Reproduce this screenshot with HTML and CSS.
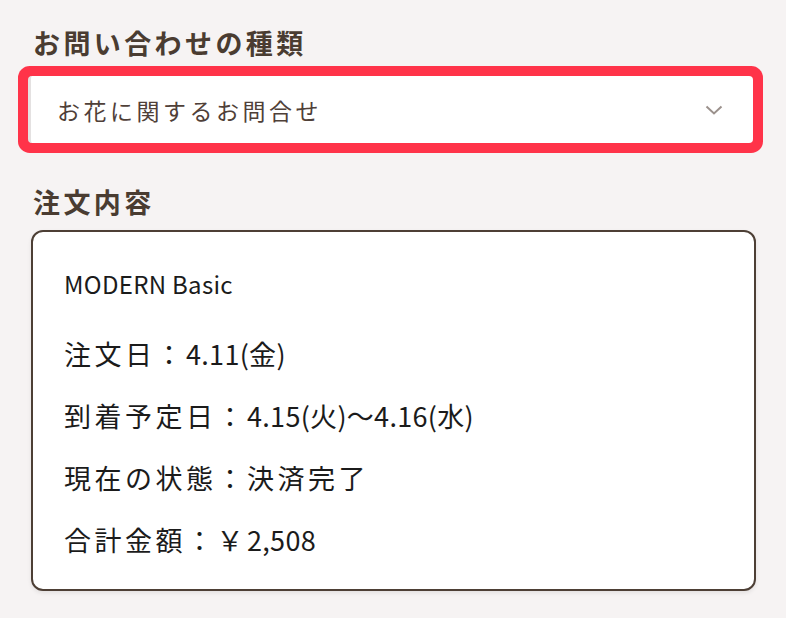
FILE: index.html
```html
<!DOCTYPE html>
<html lang="ja">
<head>
    <meta charset="UTF-8">
    <meta name="viewport" content="width=device-width, initial-scale=1.0">
    <title>お問い合わせ</title>
    <link rel="stylesheet" href="styles.css">
</head>
<body>
    <div class="contact">
        <h2 class="section-title">お問い合わせの種類</h2>
        <div class="select-box" tabindex="0">
            <span class="select-value">お花に関するお問合せ</span>
            <svg class="chevron" width="18" height="10" viewBox="0 0 18 10">
                <polyline points="1.5,1.5 9,8.5 16.5,1.5" fill="none" stroke="#9b918c" stroke-width="2"/>
            </svg>
        </div>

        <h2 class="section-title title-order">注文内容</h2>
        <div class="order-card">
            <p class="order-name">MODERN Basic</p>
            <p class="order-row">注文日：<span class="num">4.11(金)</span></p>
            <p class="order-row">到着予定日：<span class="num">4.15(火)〜4.16(水)</span></p>
            <p class="order-row">現在の状態：決済完了</p>
            <p class="order-row">合計金額：￥<span class="num">2,508</span></p>
        </div>
    </div>
</body>
</html>
```
FILE: styles.css
```css
html{
    height: 100%;
}
body{
    margin: 0;
    min-height: 100%;
    background-color: #f6f3f3;
    font-family: "Noto Sans CJK JP", "Noto Sans", sans-serif;
}
.contact{
    width: 728px;
    padding: 20px 0 0 28px;
}
.section-title{
    margin: 0;
    padding-left: 5px;
    font-size: 27px;
    line-height: 45px;
    font-weight: 700;
    letter-spacing: 3.4px;
    color: #4a3c31;
}
.title-order{
    margin-top: 36px;
}
.select-box{
    display: flex;
    align-items: center;
    justify-content: space-between;
    width: 725px;
    height: 67px;
    margin-top: 11px;
    box-sizing: border-box;
    padding: 0 30px 0 26px;
    background-color: #ffffff;
    border-left: 3px solid #e4e1e1;
    border-radius: 4px;
    box-shadow: 0 0 0 10px #ff3349;
    outline: none;
}
.select-value{
    font-size: 23px;
    letter-spacing: 3.5px;
    color: #4f4038;
}
.chevron{
    display: block;
}
.order-card{
    width: 725px;
    margin: 6px 0 0 3px;
    box-sizing: border-box;
    padding: 32px 30px 29px 31px;
    background-color: #ffffff;
    border: 2px solid #4d3f35;
    border-radius: 12px;
    box-shadow: 0 2px 4px rgba(0, 0, 0, 0.08);
    color: #1b1b1b;
}
.order-card p{
    margin: 0;
    line-height: 40px;
}
.order-name{
    font-size: 24px;
    letter-spacing: 0.3px;
}
.order-row{
    margin-top: 22px !important;
    font-size: 27px;
    letter-spacing: 3.5px;
}
.order-name + .order-row{
    margin-top: 30px !important;
}
.num{
    letter-spacing: 0.3px;
}
```
